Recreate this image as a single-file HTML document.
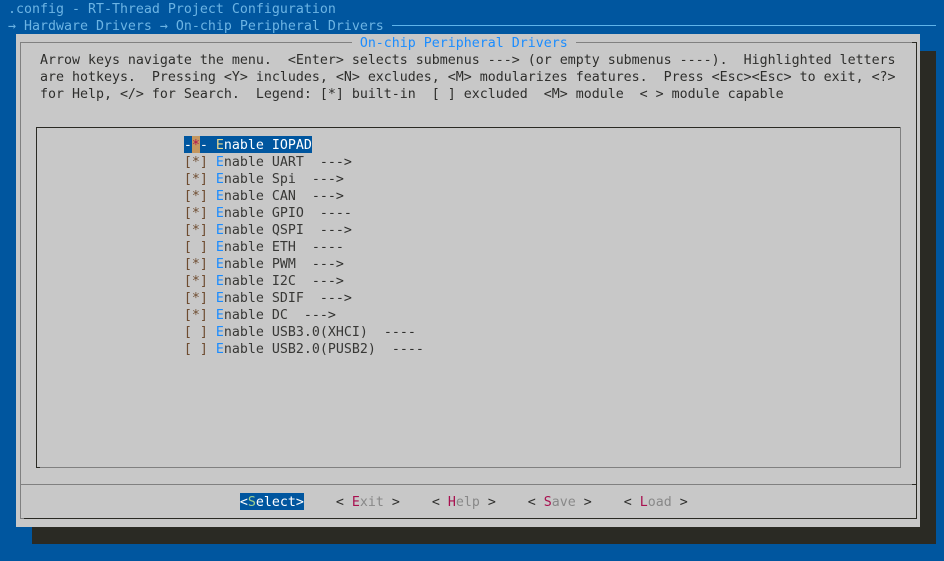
<!DOCTYPE html>
<html><head><meta charset="utf-8"><style>
html,body{margin:0;padding:0;width:944px;height:561px;overflow:hidden;background:#00569f}
pre{position:absolute;left:0;margin:0;height:17px;line-height:19px;font-family:"DejaVu Sans Mono","Liberation Mono",monospace;font-size:13.29px;color:#2e2e2c;white-space:pre}
.b{position:absolute}
.g{background:#808080}.d{background:#2a2a24}
.u{color:#6e4c30}.e{color:#1a8cff}.h{color:#383836}
.x{color:#888}.r{color:#a8104f}
.sel{background:#00569f;color:#fff;display:inline-block;height:17px;line-height:19px;vertical-align:top}
.tan{background:#c4975f;color:#b0104f;display:inline-block;height:17px;line-height:19px;vertical-align:top}
</style></head><body>
<pre style="top:0;color:#6cb4e4"> .config - RT-Thread Project Configuration</pre>
<pre style="top:17px;color:#6cb4e4"> → Hardware Drivers → On-chip Peripheral Drivers</pre>
<div class="b" style="left:392px;top:25px;width:544px;height:1px;background:#5fb4ea"></div>
<div class="b d" style="left:32px;top:51px;width:904px;height:493px"></div>
<div class="b" style="left:16px;top:34px;width:904px;height:493px;background:#c8c8c8"></div>
<div class="b g" style="left:20px;top:42px;width:1px;height:477px"></div>
<div class="b g" style="left:20px;top:42px;width:332px;height:1px"></div>
<div class="b g" style="left:576px;top:42px;width:336px;height:1px"></div>
<div class="b d" style="left:912px;top:42px;width:5px;height:1px"></div>
<div class="b d" style="left:916px;top:42px;width:1px;height:477px"></div>
<div class="b g" style="left:20px;top:518px;width:4px;height:1px"></div>
<div class="b d" style="left:24px;top:518px;width:893px;height:1px"></div>
<div class="b g" style="left:20px;top:484px;width:892px;height:1px"></div>
<div class="b d" style="left:912px;top:484px;width:5px;height:1px"></div>
<div class="b d" style="left:36px;top:127px;width:864px;height:1px"></div>
<div class="b g" style="left:900px;top:127px;width:1px;height:341px"></div>
<div class="b d" style="left:36px;top:127px;width:1px;height:341px"></div>
<div class="b g" style="left:40px;top:467px;width:861px;height:1px"></div>
<div class="b d" style="left:36px;top:467px;width:4px;height:1px"></div>
<pre style="top:34px;color:#1a8cff">                                             On-chip Peripheral Drivers</pre>
<pre style="top:51px">     Arrow keys navigate the menu.  &lt;Enter&gt; selects submenus ---&gt; (or empty submenus ----).  Highlighted letters</pre>
<pre style="top:68px">     are hotkeys.  Pressing &lt;Y&gt; includes, &lt;N&gt; excludes, &lt;M&gt; modularizes features.  Press &lt;Esc&gt;&lt;Esc&gt; to exit, &lt;?&gt;</pre>
<pre style="top:85px">     for Help, &lt;/&gt; for Search.  Legend: [*] built-in  [ ] excluded  &lt;M&gt; module  &lt; &gt; module capable</pre>
<pre style="top:136px">                       <span class="sel">-<span class="tan">*</span>- <span style="color:#e8d890">E</span>nable IOPAD</span></pre>
<pre style="top:153px">                       <span class="u">[*]</span> <span class="e">E</span><span class="h">nable UART</span>  ---&gt;</pre>
<pre style="top:170px">                       <span class="u">[*]</span> <span class="e">E</span><span class="h">nable Spi</span>  ---&gt;</pre>
<pre style="top:187px">                       <span class="u">[*]</span> <span class="e">E</span><span class="h">nable CAN</span>  ---&gt;</pre>
<pre style="top:204px">                       <span class="u">[*]</span> <span class="e">E</span><span class="h">nable GPIO</span>  ----</pre>
<pre style="top:221px">                       <span class="u">[*]</span> <span class="e">E</span><span class="h">nable QSPI</span>  ---&gt;</pre>
<pre style="top:238px">                       <span class="u">[ ]</span> <span class="e">E</span><span class="h">nable ETH</span>  ----</pre>
<pre style="top:255px">                       <span class="u">[*]</span> <span class="e">E</span><span class="h">nable PWM</span>  ---&gt;</pre>
<pre style="top:272px">                       <span class="u">[*]</span> <span class="e">E</span><span class="h">nable I2C</span>  ---&gt;</pre>
<pre style="top:289px">                       <span class="u">[*]</span> <span class="e">E</span><span class="h">nable SDIF</span>  ---&gt;</pre>
<pre style="top:306px">                       <span class="u">[*]</span> <span class="e">E</span><span class="h">nable DC</span>  ---&gt;</pre>
<pre style="top:323px">                       <span class="u">[ ]</span> <span class="e">E</span><span class="h">nable USB3.0(XHCI)</span>  ----</pre>
<pre style="top:340px">                       <span class="u">[ ]</span> <span class="e">E</span><span class="h">nable USB2.0(PUSB2)</span>  ----</pre>
<pre style="top:493px">                              <span class="sel">&lt;<span style="color:#9fd08f">S</span>elect&gt;</span>    &lt; <span class="r">E</span><span class="x">xit</span> &gt;    &lt; <span class="r">H</span><span class="x">elp</span> &gt;    &lt; <span class="r">S</span><span class="x">ave</span> &gt;    &lt; <span class="r">L</span><span class="x">oad</span> &gt;</pre>
</body></html>
